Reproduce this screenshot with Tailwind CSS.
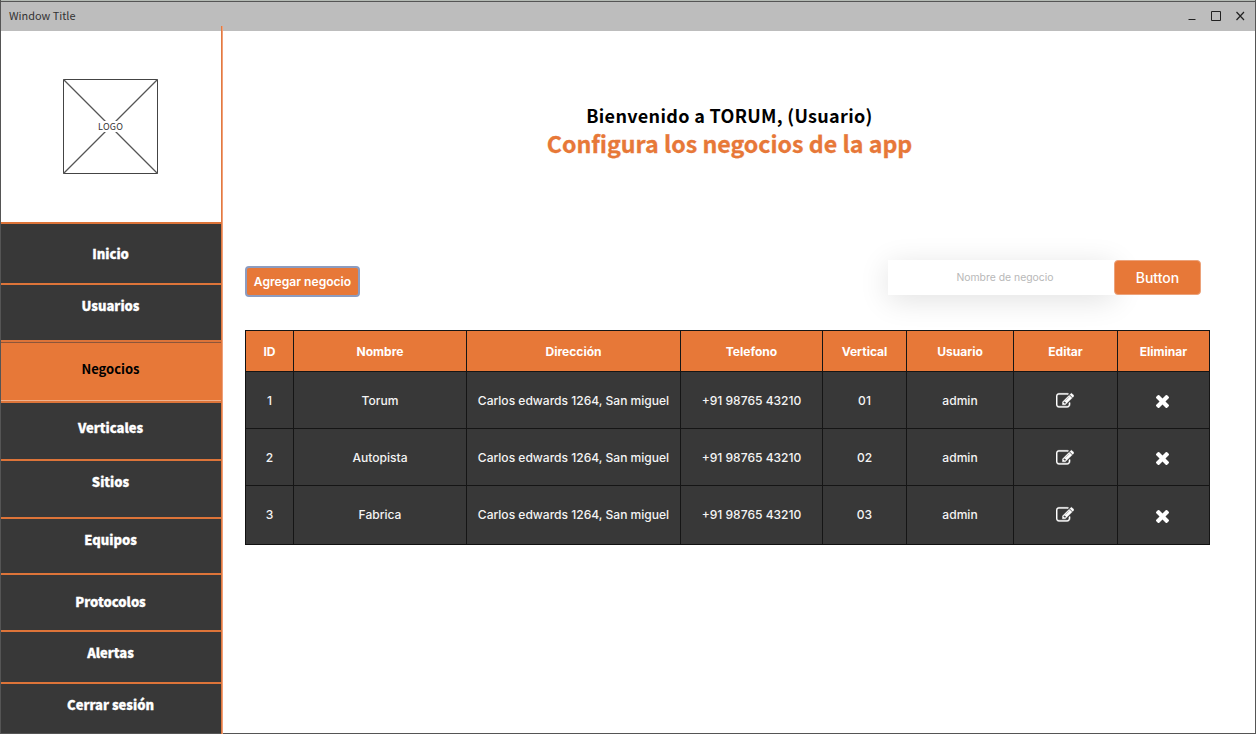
<!DOCTYPE html>
<html lang="es">
<head>
<meta charset="utf-8">
<title>Window Title</title>
<script src="https://cdn.jsdelivr.net/npm/@tailwindcss/browser@4"></script>
</head>
<body class="w-[1256px] h-[734px] overflow-hidden bg-white font-['Noto_Sans_CJK_SC',sans-serif]">
<svg class="hidden">
  <symbol id="edit" viewBox="0 0 1792 1792"><path fill="#fff" stroke="#fff" stroke-width="35" d="M888 1184l116-116-152-152-116 116v56h96v96h56zm440-720q-16-16-33 1l-350 350q-17 17-1 33t33-1l350-350q17-17 1-33zm80 594v190q0 119-84.5 203.5t-203.500 84.500h-832q-119 0-203.500-84.500t-84.500-203.500v-832q0-119 84.500-203.500t203.500-84.500h832q63 0 117 25 15 7 18 23 3 17-9 29l-49 49q-14 14-32 8-23-6-45-6h-832q-66 0-113 47t-47 113v832q0 66 47 113t113 47h832q66 0 113-47t47-113v-126q0-13 9-22l64-64q15-15 35-7t20 29zm-96-738l288 288-672 672h-288v-288zm444 132l-92 92-288-288 92-92q28-28 68-28t68 28l152 152q28 28 28 68t-28 68z"/></symbol>
  <symbol id="cross" viewBox="302 366 1188 1188"><path fill="#fff" d="M1490 1322q0 40-28 68l-136 136q-28 28-68 28t-68-28l-294-294-294 294q-28 28-68 28t-68-28l-136-136q-28-28-28-68t28-68l294-294-294-294q-28-28-28-68t28-68l136-136q28-28 68-28t68 28l294 294 294-294q28-28 68-28t68 28l136 136q28 28 28 68t-28 68l-294 294 294 294q28 28 28 68z"/></symbol>
</svg>
<div class="relative flex h-full flex-col border border-[#555] border-t-0">
  <header class="flex h-[31px] shrink-0 items-start justify-between border-t border-[#b4bab4] bg-[#bdbdbd] pl-2 pr-[7px] pt-[7px] shadow-[inset_0_1px_0_#555]">
    <span class="text-[10.9px] leading-4 text-[#333]"><span class="relative -top-px">Window Title</span></span>
    <svg class="h-4 w-[60px]" viewBox="0 0 60 16" fill="none" stroke="#222"><path d="M.5 11.500h7M23.500 3.500h9v9h-9z"/><path d="M48.500 4l7.500 8M56 4l-7.500 8" stroke-width="1.200"/></svg>
  </header>
  <div class="flex min-h-0 flex-1">
    <aside class="flex w-[220px] shrink-0 flex-col text-center">
      <div class="flex h-[191px] items-start justify-center pr-[2px] pt-[47px]">
        <svg class="h-[97px] w-[97px]" viewBox="0 0 97 97" fill="none" stroke="#444"><path d="M1.500 1.500h94v94h-94z"/><path d="m1.500 1.500 94 94M95.500 1.500l-94 94" stroke="#555" stroke-width="1.300"/><path d="M35 43h27v11H35z" fill="#fff" stroke="none"/><text x="48.500" y="51.500" text-anchor="middle" textLength="25" fill="#333" stroke="none" class="text-[9px]">LOGO</text></svg>
      </div>
      <nav class="flex flex-1 flex-col text-[13px] font-black leading-5 text-white *:shrink-0 *:border-t-2 *:border-[#dd7439] *:bg-[#383838] *:pr-[1px] [-webkit-text-stroke:0.3px]">
        <a class="h-[61px] pt-[20px]">Inicio</a>
        <a class="h-[57px] pt-[11px]">Usuarios</a>
        <a class="h-[61px] !bg-[#e77838] pt-[17px] !font-bold text-black [-webkit-text-stroke:0] shadow-[inset_0_1px_0_#8c563a,inset_0_-1px_0_#f0b08a]">Negocios</a>
        <a class="h-[58px] pt-[15px]">Verticales</a>
        <a class="h-[58px] pt-[11px]">Sitios</a>
        <a class="h-[56px] pt-[11px]">Equipos</a>
        <a class="h-[57px] pt-[17px]">Protocolos</a>
        <a class="h-[52px] pt-[11px]">Alertas</a>
        <a class="h-[51px] pt-[11px]">Cerrar sesión</a>
      </nav>
    </aside>
    <main class="flex flex-1 flex-col pl-[24px] font-[Inter,sans-serif]">
      <div class="w-[969px] pt-[70px] text-center font-['Noto_Sans_CJK_SC',sans-serif] font-bold">
        <h1 class="text-[18px] leading-7 tracking-[0.32px] text-black">Bienvenido a TORUM, (Usuario)</h1>
        <h2 class="text-[23.2px] leading-7 text-[#e77838] [-webkit-text-stroke:0.3px]">Configura los negocios de la app</h2>
      </div>
      <div class="mt-[103px] flex h-[36px] w-[956px] items-start justify-between">
        <button class="mt-[6px] h-[31px] w-[115px] rounded border-2 border-[#8c9cc0] bg-[#e77838] pt-px text-[12.1px] font-semibold text-white">Agregar negocio</button>
        <div class="flex">
          <div class="flex h-[35px] w-[227px] items-center justify-center bg-white pl-[7px] text-[10.4px] text-[#b8b8b8] shadow-[0_5px_30px_rgba(0,0,0,0.12)]">Nombre de negocio</div>
          <button class="relative -ml-px h-[35px] w-[87px] rounded border border-[#eca27a] bg-[#e77838] text-[14px] font-medium text-white">Button</button>
        </div>
      </div>
      <div class="mt-[34px] grid w-[965px] grid-cols-[48px_173px_214px_142px_84px_107px_104px_92px] grid-rows-[41px_57px_57px_59px] border-b border-l border-[#111] text-[12.05px] font-medium text-[#f4f4f4] *:flex *:items-center *:justify-center *:border-t *:border-r *:border-[#151515] *:bg-[#383838] *:pt-[2px] [&>:nth-child(n+25)]:!pt-0">
        <div class="!bg-[#e77838] font-bold text-white">ID</div><div class="!bg-[#e77838] font-bold text-white">Nombre</div><div class="!bg-[#e77838] font-bold text-white">Dirección</div><div class="!bg-[#e77838] font-bold text-white">Telefono</div><div class="!bg-[#e77838] font-bold text-white">Vertical</div><div class="!bg-[#e77838] font-bold text-white">Usuario</div><div class="!bg-[#e77838] font-bold text-white">Editar</div><div class="!bg-[#e77838] font-bold text-white">Eliminar</div>
        <div>1</div><div>Torum</div><div>Carlos edwards 1264, San miguel</div><div>+91 98765 43210</div><div>01</div><div>admin</div><div class="pr-px"><svg class="h-[18px] w-[18px]"><use href="#edit"/></svg></div><div class="pr-[2px]"><svg class="h-[13px] w-[13px]"><use href="#cross"/></svg></div>
        <div>2</div><div>Autopista</div><div>Carlos edwards 1264, San miguel</div><div>+91 98765 43210</div><div>02</div><div>admin</div><div class="pr-px"><svg class="h-[18px] w-[18px]"><use href="#edit"/></svg></div><div class="pr-[2px]"><svg class="h-[13px] w-[13px]"><use href="#cross"/></svg></div>
        <div>3</div><div>Fabrica</div><div>Carlos edwards 1264, San miguel</div><div>+91 98765 43210</div><div>03</div><div>admin</div><div class="pr-px"><svg class="h-[18px] w-[18px]"><use href="#edit"/></svg></div><div class="pr-[2px]"><svg class="mt-[2px] h-[13px] w-[13px]"><use href="#cross"/></svg></div>
      </div>
    </main>
  </div>
  <div class="absolute left-[220px] top-[26px] h-[708px] w-[2px] border-r border-[#f2a077] bg-[#e07a42]"></div>
</div>
</body>
</html>
